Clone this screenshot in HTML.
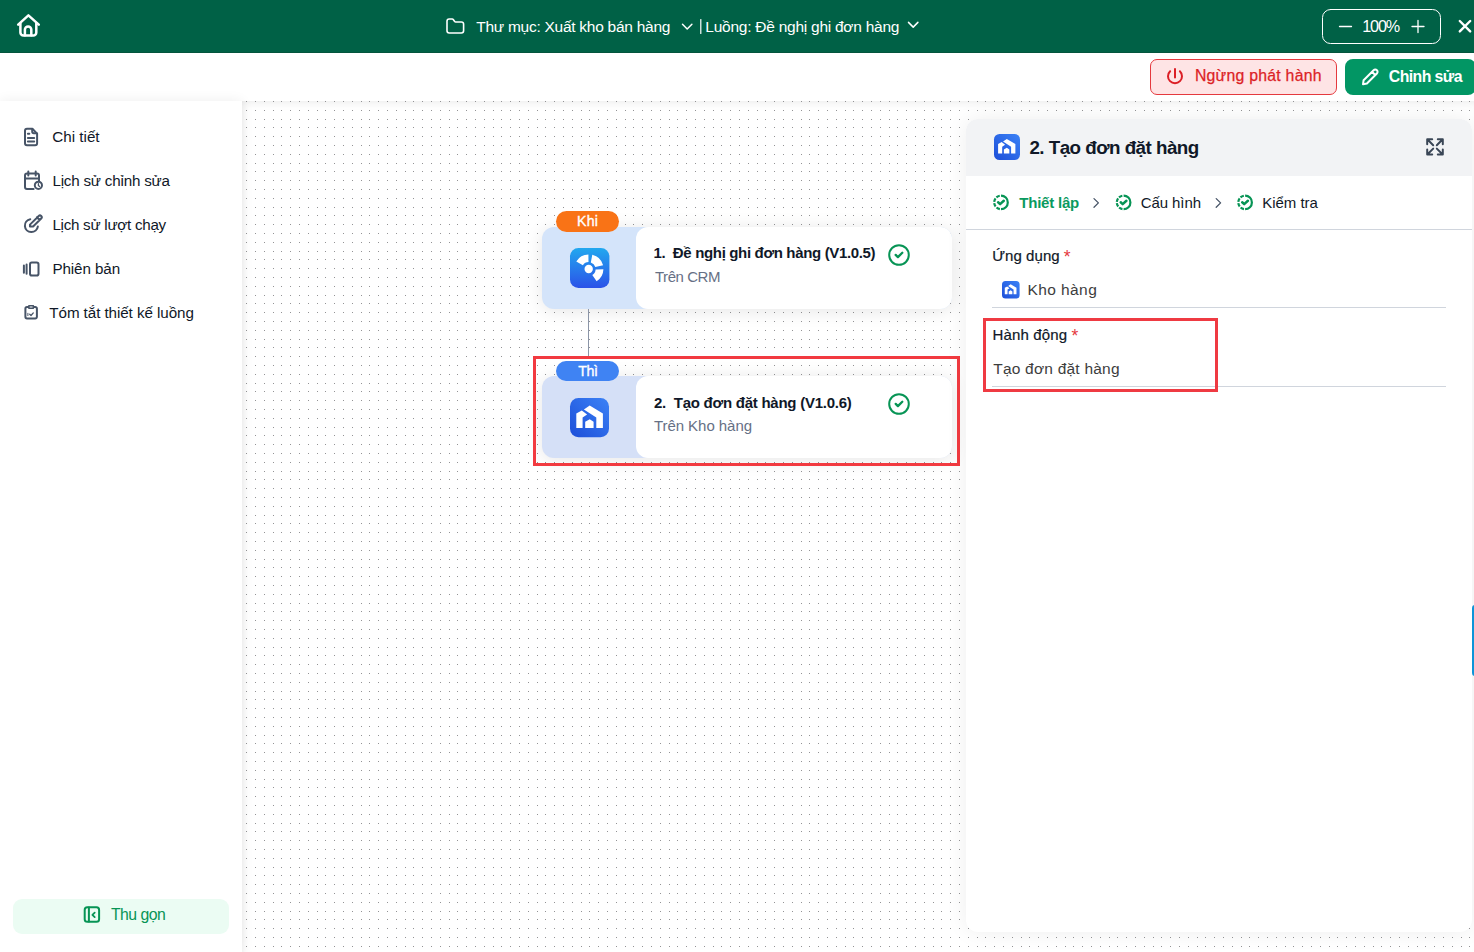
<!DOCTYPE html>
<html><head><meta charset="utf-8">
<style>
*{margin:0;padding:0;box-sizing:border-box}
html,body{width:1474px;height:952px;overflow:hidden;background:#fff;font-family:"Liberation Sans",sans-serif;position:relative}
.a{position:absolute}
.t{position:absolute;white-space:nowrap;line-height:1;z-index:5}
svg{position:absolute;overflow:visible}
</style></head><body>

<!-- HEADER -->
<div class="a" id="hdr" style="z-index:3;left:0;top:0;width:1474px;height:53px;background:#006146;border-bottom:1px solid #04553d">
  <svg style="left:0;top:0" width="60" height="53" fill="none" stroke="#fff" stroke-width="2.5" stroke-linecap="round" stroke-linejoin="round">
    <path d="M18.2 24.6 L28.4 15.4 L38.8 24.6"/>
    <path d="M20.4 23.2 V32.4 a3 3 0 0 0 3 3 H33.3 a3 3 0 0 0 3-3 V23.2"/>
    <path d="M24.9 35.2 V29.6 a3.2 3.2 0 0 1 6.4 0 V35.2"/>
  </svg>
  <svg style="left:0;top:0" width="1474" height="53" fill="none" stroke="#fff" stroke-linecap="round" stroke-linejoin="round">
    <path stroke-width="1.6" d="M447 21.2 a2.2 2.2 0 0 1 2.2-2.2 h3 a1.2 1.2 0 0 1 1 .5 l1.5 2 a1.2 1.2 0 0 0 1 .5 H461.4 a2.2 2.2 0 0 1 2.2 2.2 V30.8 a2.2 2.2 0 0 1-2.2 2.2 H449.2 a2.2 2.2 0 0 1-2.2-2.2 Z"/>
    <path stroke-width="1.5" d="M682.5 24.3 L687.2 29 L691.9 24.3"/>
    <path stroke-width="1.2" d="M700.8 19.5 V33.5"/>
    <path stroke-width="1.5" d="M908.5 22.4 L913.2 27.1 L917.9 22.4"/>
    <rect x="1322.5" y="9.5" width="118" height="34" rx="8" stroke-width="1"/>
    <path stroke-width="1.3" d="M1339.5 26.5 H1351.5"/>
    <path stroke-width="1.3" d="M1412 26.5 H1424 M1418 20.5 V32.5"/>
    <path stroke-width="2.4" d="M1459.8 21 L1470.2 31.4 M1470.2 21 L1459.8 31.4"/>
  </svg>
</div>

<!-- TOOLBAR -->
<div class="a" id="tb" style="left:0;top:53px;width:1474px;height:48px;background:#fff;z-index:1">
  <div class="a" style="left:1150px;top:6px;width:187px;height:36px;background:#fee4e5;border:1px solid #e5393e;border-radius:7px"></div>
  <div class="a" style="left:1345px;top:6px;width:131px;height:36px;background:#029664;border-radius:8px"></div>
  <svg style="left:0;top:-53px" width="1474" height="110" fill="none" stroke-linecap="round" stroke-linejoin="round">
    <path stroke="#dc1f26" stroke-width="2" d="M1170.1 71.2 A7 7 0 1 0 1179.9 71.2 M1175 69 V77.4"/>
    <path stroke="#fff" stroke-width="2" d="M1363 84.3 L1363.6 80.2 L1373.6 70.2 a2.3 2.3 0 0 1 3.3 3.3 L1366.9 83.5 Z M1372 71.8 L1375.2 75"/>
  </svg>
</div>

<!-- CANVAS -->
<div class="a" id="canvas" style="left:242px;top:101px;width:1232px;height:851px;background:#fff;overflow:hidden;box-shadow:inset 0 7px 9px -5px rgba(0,0,0,.075), inset 6px 0 8px -6px rgba(0,0,0,.06)">
  <svg style="left:0;top:0" width="1232" height="851" shape-rendering="crispEdges">
    <defs><pattern id="dots" patternUnits="userSpaceOnUse" x="4" y="0" width="44" height="44"><g fill="#939395"><rect x="0" y="0" width="1" height="1"/><rect x="9" y="0" width="1" height="1"/><rect x="18" y="0" width="1" height="1"/><rect x="27" y="0" width="1" height="1"/><rect x="35" y="0" width="1" height="1"/><rect x="0" y="9" width="1" height="1"/><rect x="9" y="9" width="1" height="1"/><rect x="18" y="9" width="1" height="1"/><rect x="27" y="9" width="1" height="1"/><rect x="35" y="9" width="1" height="1"/><rect x="0" y="18" width="1" height="1"/><rect x="9" y="18" width="1" height="1"/><rect x="18" y="18" width="1" height="1"/><rect x="27" y="18" width="1" height="1"/><rect x="35" y="18" width="1" height="1"/><rect x="0" y="26" width="1" height="1"/><rect x="9" y="26" width="1" height="1"/><rect x="18" y="26" width="1" height="1"/><rect x="27" y="26" width="1" height="1"/><rect x="35" y="26" width="1" height="1"/><rect x="0" y="35" width="1" height="1"/><rect x="9" y="35" width="1" height="1"/><rect x="18" y="35" width="1" height="1"/><rect x="27" y="35" width="1" height="1"/><rect x="35" y="35" width="1" height="1"/></g></pattern></defs>
    <rect x="0" y="0" width="1232" height="851" fill="url(#dots)"/>
  </svg>
  <div class="a" style="left:300px;top:126px;width:410px;height:82px;background:#d4e4fa;border-radius:12px;box-shadow:0 2px 18px rgba(0,0,0,.1)"></div>
  <div class="a" style="left:394px;top:126px;width:316px;height:82px;background:#fff;border-radius:12px"></div>
  <div class="a" style="left:314px;top:110px;width:63px;height:21px;background:#f97316;border-radius:11px"></div>
  <svg style="left:327.7px;top:146.5px" width="40" height="40"><defs><linearGradient id="gcrm" x1="0" y1="0" x2="0" y2="1"><stop offset="0" stop-color="#22a8ef"/><stop offset="1" stop-color="#2b52e8"/></linearGradient></defs><rect x="0" y="0" width="39.4" height="39.9" rx="8.5" fill="url(#gcrm)"/>
  <g fill="#fff" transform="translate(18.7 21)"><circle r="4.2"/>
  <path d="M-12.4 -7.6 A14.5 14.5 0 0 1 -0.3 -14.5 L-0.2 -6.9 A6.9 6.9 0 0 0 -5.8 -3.7 Z"/>
  <path d="M3.6 -14.2 A14.6 14.6 0 0 1 14.4 -3.7 L6.6 -1.9 A6.9 6.9 0 0 0 2.1 -6.6 Z"/>
  <path d="M14.7 0.3 A14.7 14.7 0 0 1 7.9 12.3 L3.6 6.0 A6.9 6.9 0 0 0 6.9 0.4 Z"/></g></svg>
  <svg style="left:646px;top:143px" width="22" height="22" fill="none" stroke="#079455" stroke-linecap="round" stroke-linejoin="round"><circle cx="11" cy="11" r="9.8" stroke-width="2"/><path d="M7.7 10.9 L9.9 13.1 L14.3 8.7" stroke-width="2.3"/></svg>
  <div class="a" style="left:346px;top:208px;width:1px;height:50px;background:#8b95a7"></div>
  <div class="a" style="left:300px;top:275px;width:410px;height:82px;background:#d5e0f7;border-radius:12px;box-shadow:0 2px 18px rgba(0,0,0,.1)"></div>
  <div class="a" style="left:394px;top:275px;width:316px;height:82px;background:#fff;border-radius:12px"></div>
  <div class="a" style="left:314px;top:260px;width:63px;height:20px;background:#3f83f3;border-radius:10px"></div>
  <svg style="left:328px;top:296.6px" width="40" height="40"><defs><linearGradient id="gkho" x1="0" y1="1" x2="1" y2="0"><stop offset="0" stop-color="#1d4ed8"/><stop offset="1" stop-color="#3b82f6"/></linearGradient></defs><rect x="0" y="0" width="39" height="39.2" rx="8.5" fill="url(#gkho)"/>
  <g fill="#fff"><path d="M13.9 11.6 L19.7 7.6 L32.9 15.5 V30 H26.3 V19.5 Z"/><path d="M6.3 15.5 L11.8 12.4 L17.1 16.6 L12.6 19.5 V30 H6.3 Z"/><path d="M15.2 23.7 L19.7 21.3 L23.6 23.7 V30 H15.2 Z"/></g></svg>
  <svg style="left:646px;top:292px" width="22" height="22" fill="none" stroke="#079455" stroke-linecap="round" stroke-linejoin="round"><circle cx="11" cy="11" r="9.8" stroke-width="2"/><path d="M7.7 10.9 L9.9 13.1 L14.3 8.7" stroke-width="2.3"/></svg>
  <div class="a" style="left:291px;top:255px;width:427px;height:110px;border:3px solid #f23a40"></div>

</div>

<!-- SIDEBAR -->
<div class="a" id="side" style="left:0;top:101px;width:242px;height:851px;background:#fff;z-index:2;box-shadow:0 0 12px rgba(0,0,0,.07)">
  <svg style="left:0;top:-101px" width="242" height="952" fill="none" stroke="#475467" stroke-width="2" stroke-linecap="round" stroke-linejoin="round">
    <path d="M32.4 128.8 H27 a2 2 0 0 0-2 2 V143.2 a2 2 0 0 0 2 2 H35.1 a2 2 0 0 0 2-2 V133.6 Z"/>
    <path d="M32.2 129 V131.6 a1.6 1.6 0 0 0 1.6 1.6 H36.8"/>
    <path d="M27.9 133.8 H29.3 M27.9 137.9 H34.2 M27.9 141.6 H34.2"/>
    <path d="M33.6 189 H27 a2 2 0 0 1-2-2 V175.6 a2 2 0 0 1 2-2 H37 a2 2 0 0 1 2 2 V180.8"/>
    <path d="M28.3 171.6 V175.6 M35.7 171.6 V175.6 M25 178.5 H39"/>
    <circle cx="38.4" cy="185.3" r="3.6"/>
    <path d="M38.4 183.6 V185.4 L39.6 186.4" stroke-width="1.3"/>
    <path d="M30.27 219.2 A6.5 6.5 0 1 0 37.84 226.5"/>
    <path d="M29.96 226.5 V224.64 L38.72 216.0 A1.75 1.75 0 0 1 41.2 218.5 L33.1 226.5 Z M36.9 217.3 L39.4 219.8"/>
    <rect x="30" y="262.6" width="8.5" height="12.9" rx="1.8"/>
    <path d="M23.9 265.6 V272.8 M26.6 264.6 V273.8"/>
    <path d="M28.6 307 H27 a1.6 1.6 0 0 0-1.6 1.6 V316.8 a1.6 1.6 0 0 0 1.6 1.6 H35.3 a1.6 1.6 0 0 0 1.6-1.6 V308.6 a1.6 1.6 0 0 0-1.6-1.6 H33.6"/>
    <path d="M28.8 305.7 H33.4 V308.3 H28.8 Z" stroke-width="1.4"/>
    <path d="M29.7 314.3 L31 315.5 L33.3 312.9" stroke-width="1.3"/>
    <path d="M27.9 313.3 V315.6" stroke-width="1"/>
  </svg>
  <div class="a" style="left:13px;top:798px;width:216px;height:35px;background:#ebfcf3;border-radius:9px"></div>
  <svg style="left:0;top:-101px" width="242" height="952" fill="none" stroke="#079455" stroke-width="2" stroke-linecap="round" stroke-linejoin="round">
    <rect x="84.7" y="907.3" width="14.4" height="14.5" rx="2.6"/>
    <path d="M88.9 907.5 V921.6"/>
    <path d="M94.7 912.6 L92.4 914.8 L94.7 917.1" stroke-width="1.8"/>
  </svg>
</div>

<!-- RIGHT PANEL -->
<div class="a" id="panel" style="left:966px;top:119px;width:506px;height:813px;background:#fff;border-radius:12px;box-shadow:0 0 22px rgba(0,0,0,.07);overflow:hidden">
  <div class="a" style="left:0;top:0;width:506px;height:57px;background:#f2f3f5"></div>
  <div class="a" style="left:0;top:110px;width:506px;height:1px;background:#d0d5dd"></div>
  <svg style="left:28.3px;top:15.1px" width="27" height="27"><defs><linearGradient id="gkho2" x1="0" y1="1" x2="1" y2="0"><stop offset="0" stop-color="#1d4ed8"/><stop offset="1" stop-color="#3b82f6"/></linearGradient></defs><rect x="0" y="0" width="26" height="26" rx="5.5" fill="url(#gkho2)"/>
  <g fill="#fff" transform="scale(0.65)"><path d="M13.9 11.6 L19.7 7.6 L32.9 15.5 V30 H26.3 V19.5 Z"/><path d="M6.3 15.5 L11.8 12.4 L17.1 16.6 L12.6 19.5 V30 H6.3 Z"/><path d="M15.2 23.7 L19.7 21.3 L23.6 23.7 V30 H15.2 Z"/></g></svg>
  <svg style="left:-966px;top:-119px" width="1474" height="952" fill="none" stroke-linecap="round" stroke-linejoin="round">
    <g stroke="#3a4656" stroke-width="2"><path d="M1432.2 139.2 H1427.2 V144.2 M1427.8 139.8 L1433.2 145.2"/><path d="M1437.8 139.2 H1442.8 V144.2 M1442.2 139.8 L1436.8 145.2"/><path d="M1432.2 154.6 H1427.2 V149.6 M1427.8 154 L1433.2 148.6"/><path d="M1437.8 154.6 H1442.8 V149.6 M1442.2 154 L1436.8 148.6"/></g>
    <g stroke="#079455" stroke-width="2">
      <g transform="translate(1001 202.4)"><path d="M0 -6.8 A6.8 6.8 0 0 1 0 6.8" stroke-width="2.2" stroke-linecap="butt"/><path d="M0 -6.8 A6.8 6.8 0 0 0 -6.8 0 A6.8 6.8 0 0 0 0 6.8" stroke-dasharray="3.715 1.3" stroke-dashoffset="3.715" stroke-linecap="butt" stroke-width="2.2"/><path d="M-2.9 -0.1 L-0.9 1.7 L2.8 -1.6" stroke-width="2.5"/></g>
      <g transform="translate(1123.6 202.4)"><path d="M0 -6.8 A6.8 6.8 0 0 1 0 6.8" stroke-width="2.2" stroke-linecap="butt"/><path d="M0 -6.8 A6.8 6.8 0 0 0 -6.8 0 A6.8 6.8 0 0 0 0 6.8" stroke-dasharray="3.715 1.3" stroke-dashoffset="3.715" stroke-linecap="butt" stroke-width="2.2"/><path d="M-2.9 -0.1 L-0.9 1.7 L2.8 -1.6" stroke-width="2.5"/></g>
      <g transform="translate(1245.1 202.4)"><path d="M0 -6.8 A6.8 6.8 0 0 1 0 6.8" stroke-width="2.2" stroke-linecap="butt"/><path d="M0 -6.8 A6.8 6.8 0 0 0 -6.8 0 A6.8 6.8 0 0 0 0 6.8" stroke-dasharray="3.715 1.3" stroke-dashoffset="3.715" stroke-linecap="butt" stroke-width="2.2"/><path d="M-2.9 -0.1 L-0.9 1.7 L2.8 -1.6" stroke-width="2.5"/></g>
    </g>
    <g stroke="#475467" stroke-width="1.3"><path d="M1094 198.6 L1098.4 202.9 L1094 207.2"/><path d="M1216.2 198.6 L1220.6 202.9 L1216.2 207.2"/></g>
  </svg>
  <svg style="left:35.5px;top:161.9px" width="18" height="18"><rect x="0" y="0" width="17.6" height="17.6" rx="3.5" fill="url(#gkho2)"/>
  <g fill="#fff" transform="scale(0.44)"><path d="M13.9 11.6 L19.7 7.6 L32.9 15.5 V30 H26.3 V19.5 Z"/><path d="M6.3 15.5 L11.8 12.4 L17.1 16.6 L12.6 19.5 V30 H6.3 Z"/><path d="M15.2 23.7 L19.7 21.3 L23.6 23.7 V30 H15.2 Z"/></g></svg>
  <div class="a" style="left:26px;top:188px;width:454px;height:1px;background:#d0d5dd"></div>
  <div class="a" style="left:26px;top:267px;width:454px;height:1px;background:#d0d5dd"></div>
  <div class="a" style="left:17px;top:199px;width:235px;height:74px;border:3px solid #ef3a42"></div>
</div>
<div class="a" style="left:1471.6px;top:605px;width:6px;height:71px;background:#0e94d8;border-radius:4px"></div>>

<!-- TEXT -->
<div class="t" style="left:476.2px;top:18.8px;font-size:15.5px;letter-spacing:-0.264px;color:#fff;">Thư mục: Xuất kho bán hàng</div>
<div class="t" style="left:705.3px;top:18.8px;font-size:15.5px;letter-spacing:-0.249px;color:#fff;">Luồng: Đề nghị ghi đơn hàng</div>
<div class="t" style="left:1362.2px;top:18.3px;font-size:16.2px;letter-spacing:-1.138px;color:#fff;">100%</div>
<div class="t" style="left:1194.9px;top:67.9px;font-size:15.8px;letter-spacing:0.261px;color:#dc1f26;-webkit-text-stroke:0.25px #dc1f26;">Ngừng phát hành</div>
<div class="t" style="left:1388.8px;top:68.9px;font-size:15.8px;font-weight:bold;letter-spacing:-0.563px;color:#fff;">Chỉnh sửa</div>
<div class="t" style="left:52.3px;top:129.0px;font-size:15.2px;letter-spacing:-0.0px;color:#101828;">Chi tiết</div>
<div class="t" style="left:52.4px;top:173.0px;font-size:15.2px;letter-spacing:-0.202px;color:#101828;">Lịch sử chỉnh sửa</div>
<div class="t" style="left:52.4px;top:217.0px;font-size:15.2px;letter-spacing:-0.27px;color:#101828;">Lịch sử lượt chạy</div>
<div class="t" style="left:52.4px;top:261.0px;font-size:15.2px;letter-spacing:-0.087px;color:#101828;">Phiên bản</div>
<div class="t" style="left:49.3px;top:304.8px;font-size:15.2px;letter-spacing:-0.072px;color:#101828;">Tóm tắt thiết kế luồng</div>
<div class="t" style="left:110.9px;top:906.9px;font-size:15.8px;letter-spacing:-0.5px;color:#079455;">Thu gọn</div>
<div class="t" style="left:577.0px;top:213.9px;font-size:14.2px;letter-spacing:0.2px;color:#fff;-webkit-text-stroke:0.35px #fff;">Khi</div>
<div class="t" style="left:578.2px;top:363.9px;font-size:14.2px;letter-spacing:-0.4px;color:#fff;-webkit-text-stroke:0.35px #fff;">Thì</div>
<div class="t" style="left:653.4px;top:245.0px;font-size:15.0px;font-weight:bold;letter-spacing:-0.343px;color:#101828;">1.&nbsp; Đề nghị ghi đơn hàng (V1.0.5)</div>
<div class="t" style="left:654.9px;top:269.0px;font-size:15.0px;letter-spacing:-0.428px;color:#667085;">Trên CRM</div>
<div class="t" style="left:653.9px;top:394.8px;font-size:15.0px;font-weight:bold;letter-spacing:-0.25px;color:#101828;">2.&nbsp; Tạo đơn đặt hàng (V1.0.6)</div>
<div class="t" style="left:653.9px;top:417.8px;font-size:15.0px;letter-spacing:-0.045px;color:#667085;">Trên Kho hàng</div>
<div class="t" style="left:1029.4px;top:139.0px;font-size:18.8px;font-weight:bold;letter-spacing:-0.522px;color:#101828;">2. Tạo đơn đặt hàng</div>
<div class="t" style="left:1019.3px;top:194.8px;font-size:15.0px;font-weight:bold;letter-spacing:-0.225px;color:#0a9a60;">Thiết lập</div>
<div class="t" style="left:1140.7px;top:194.8px;font-size:15.0px;letter-spacing:-0.081px;color:#101828;">Cấu hình</div>
<div class="t" style="left:1262.2px;top:194.8px;font-size:15.0px;letter-spacing:-0.019px;color:#101828;">Kiểm tra</div>
<div class="t" style="left:992.2px;top:247.8px;font-size:15.0px;letter-spacing:0.062px;color:#101828;-webkit-text-stroke:0.2px #101828;">Ứng dụng</div>
<div class="t" style="left:1063.8px;top:249.3px;font-size:17.5px;letter-spacing:0.0px;color:#e5393e;">*</div>
<div class="t" style="left:1027.4px;top:282.2px;font-size:15.5px;letter-spacing:0.429px;color:#3d3d3d;">Kho hàng</div>
<div class="t" style="left:992.4px;top:326.8px;font-size:15.0px;letter-spacing:0.162px;color:#101828;-webkit-text-stroke:0.2px #101828;">Hành động</div>
<div class="t" style="left:1071.6px;top:328.2px;font-size:17.5px;letter-spacing:0.0px;color:#e5393e;">*</div>
<div class="t" style="left:993.2px;top:360.8px;font-size:15.5px;letter-spacing:0.222px;color:#3d3d3d;">Tạo đơn đặt hàng</div>
</body></html>
